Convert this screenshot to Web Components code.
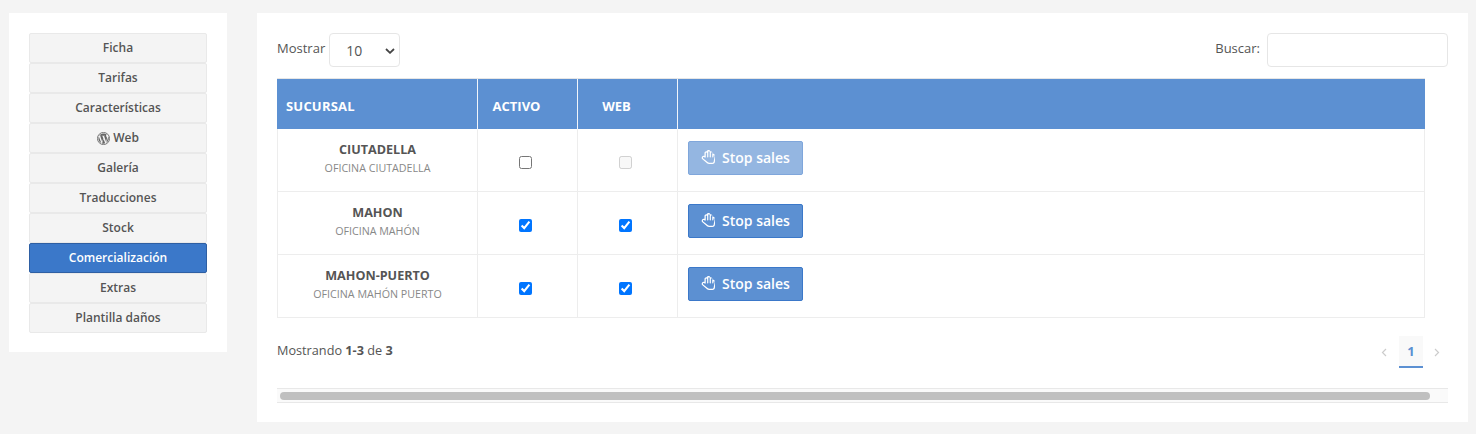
<!DOCTYPE html>
<html lang="es"><head><meta charset="utf-8"><title>Comercialización</title>
<style>
html,body{margin:0;padding:0;background:#f4f4f4}
body{font-family:"Open Sans",sans-serif;color:#555;width:1476px;height:434px;overflow:hidden}
</style></head><body>
<app-page>
  <side-nav slot="side">
    <nav-btn>Ficha</nav-btn><nav-btn>Tarifas</nav-btn><nav-btn>Características</nav-btn>
    <nav-btn icon="wp">Web</nav-btn><nav-btn>Galería</nav-btn><nav-btn>Traducciones</nav-btn>
    <nav-btn>Stock</nav-btn><nav-btn active>Comercialización</nav-btn><nav-btn>Extras</nav-btn><nav-btn>Plantilla daños</nav-btn>
  </side-nav>
  <data-panel slot="main">
    <branch-row name="CIUTADELLA" sub="OFICINA CIUTADELLA" web-disabled></branch-row>
    <branch-row name="MAHON" sub="OFICINA MAHÓN" active web></branch-row>
    <branch-row name="MAHON-PUERTO" sub="OFICINA MAHÓN PUERTO" active web last></branch-row>
  </data-panel>
</app-page>
<script>
function def(name, html, setup){
  customElements.define(name, class extends HTMLElement{
    constructor(){super();this.attachShadow({mode:'open'});}
    connectedCallback(){
      this.shadowRoot.innerHTML = typeof html==='function'?html(this):html;
      if(setup)setup(this);
    }
  });
}
const HAND='<svg viewBox="0 0 448 512" width="14" height="16" fill="currentColor" aria-hidden="true"><path d="M372.6 112c-2.6 0-5.200.2-7.700.6V95.500c0-34.300-32.400-61.600-67.500-53.800C289.200 17.500 266.400 0 239.500 0c-27.900 0-51.300 18.800-58.500 44.300C146 37.400 112 64.200 112 99.200v87.500c-29.800-11.900-64-1.200-80.600 25.900-17 27.800-11.700 65 13.300 85.900l130.700 110.100C193 423.300 213.700 448 256 448h104c60 0 88-46 88-100V187.500c0-41.500-33.500-75.500-75.400-75.500zM408 348c0 36-22 60-48 60H256c-23 0-37-14-54-28.700L70.400 268.600c-9.400-8-11.400-22.400-4.700-33.400 8-13 25.400-16.200 37.500-7l16 12.200c14 10.700 32.800.7 32.800-15.900V99.200c0-29.800 43.700-30 43.700 0V224c0 8.800 7.200 16 16 16h6.400c8.800 0 16-7.200 16-16V63.500c0-30.600 43.700-30.400 43.700 0V224c0 8.800 7.200 16 16 16h6.400c8.800 0 16-7.200 16-16V95.500c0-30 43.700-30.400 43.700 0V224c0 8.800 7.200 16 16 16h6.400c8.800 0 16-7.200 16-16v-36.500c0-29.900 43.600-30.300 43.600 0z"/></svg>';
const WP='<svg viewBox="0 0 24 24" width="13" height="13" aria-hidden="true"><circle cx="12" cy="12" r="11.200" fill="none" stroke="#666" stroke-width="1.600"/><path fill="#666" d="M2.600 12c0 3.700 2.200 6.900 5.300 8.500L3.400 8.200A9.400 9.400 0 0 0 2.600 12zm15.800-.5c0-1.200-.4-2-.8-2.600-.5-.8-.9-1.400-.9-2.200 0-.8.600-1.600 1.500-1.600h.1A9.400 9.400 0 0 0 4 6.900h.6c1 0 2.500-.1 2.500-.1.500 0 .6.700.1.800 0 0-.5.100-1.100.1l3.500 10.300 2.100-6.200-1.500-4.100c-.5 0-1-.1-1-.1-.5 0-.5-.8 0-.8 0 0 1.600.1 2.500.1 1 0 2.500-.1 2.500-.1.500 0 .6.700.1.800 0 0-.5.100-1.100.1l3.500 10.200 1-3.200c.4-1.300.7-2.200.7-3zM12.200 12.800l-2.900 8.300a9.400 9.400 0 0 0 5.800-.2l-.1-.1zM20.500 7.400l.1 1c0 1-.2 2-.7 3.400l-2.900 8.300A9.400 9.400 0 0 0 20.500 7.400z"/></svg>';

def('app-page',`<style>
:host{display:flex;align-items:flex-start;gap:30px;padding:13px 8px 12px 9px}
::slotted([slot=side]){flex:0 0 218px}
::slotted([slot=main]){flex:0 0 1211px}
</style><slot name="side"></slot><slot name="main"></slot>`);

def('side-nav',`<style>
:host{display:flex;flex-direction:column;box-sizing:border-box;background:#fff;padding:20px 20px 19px;height:339px}
::slotted(*){flex:none}
</style><slot></slot>`);

def('nav-btn',el=>`<style>
:host{display:flex;align-items:center;justify-content:center;gap:3px;box-sizing:border-box;height:30px;background:#f4f4f4;border:1px solid #e9e9e9;border-radius:2px;font-size:12px;font-weight:600;color:#555;line-height:16px}
:host([active]){background:#3b78c9;border-color:#2e5fa3;color:#fff}
svg{display:block}
</style>${el.getAttribute('icon')==='wp'?WP:''}<span><slot></slot></span>`);

def('data-panel',`<style>
:host{display:block;box-sizing:border-box;background:#fff;height:409px;padding:20px;font-size:13px;color:#555}
.top{display:flex;justify-content:space-between;align-items:center;height:34px;margin-bottom:11px}
.lab{display:flex;align-items:center;line-height:16px}
.lab>span:first-child{position:relative;top:-2px}
.g1{gap:4px}.g2{gap:7px}
.select{position:relative;width:71px;height:34px;display:block}
select{appearance:none;-webkit-appearance:none;box-sizing:border-box;width:100%;height:100%;border:1px solid #e6e6e6;border-radius:4px;background:#fff;color:#555;font:14px "Open Sans",sans-serif;padding:0 0 0 16px;margin:0;outline:0}
.select svg{position:absolute;right:5px;top:15px;pointer-events:none}
input[type=search]{appearance:none;-webkit-appearance:none;box-sizing:border-box;width:181px;height:34px;border:1px solid #e6e6e6;border-radius:4px;background:#fff;margin:0;padding:0;outline:0;display:block}
.tbl{width:1148px;box-sizing:border-box}
.head{display:grid;grid-template-columns:201px 100px 100px 1fr;height:51px;background:#5c90d2;border-top:1px solid #e6e6e6;box-sizing:border-box;color:#fff;font-weight:700;font-size:13px}
.head div{display:flex;align-items:center;border-right:1px solid #f1f5fb;box-sizing:border-box;padding-top:4px}
.head div:last-child{border-right:0}
.head .c{justify-content:center;padding-right:22px}
.head .l{padding-left:9px;letter-spacing:.2px}
.body{border:1px solid #ededed;border-top:0;border-bottom:0;margin:0}
.foot{display:flex;justify-content:space-between;align-items:flex-start;margin-top:18px;height:52px;box-sizing:border-box}
.info{line-height:16px;padding-top:6px;font-size:12.7px}
.info b{font-weight:700}
.pager{display:flex;align-items:flex-start;color:#ccc;font-size:13px}
.pager span{display:flex;align-items:center;justify-content:center;height:32px}
.ch{width:24px}
.ch.n{width:23px}
.num{width:24px;box-sizing:border-box;background:#f9f9f9;border-bottom:2px solid #5c90d2;color:#5c90d2;font-weight:700;margin:0 2px 0 3px}
.track{box-sizing:border-box;width:1171px;height:15px;background:#fafafa;border-top:1px solid #e8e8e8;border-bottom:1px solid #e8e8e8;padding:3px 18px 0 3px}
.thumb{height:8px;border-radius:4px;background:#c0c0c0}
</style>
<div class="top">
  <label class="lab g1"><span>Mostrar</span><span class="select"><select aria-label="Mostrar"><option>10</option><option>25</option><option>50</option></select><svg width="10" height="6" viewBox="0 0 10 6" fill="none" stroke="#444" stroke-width="1.800"><path d="M1 1l4 3.800L9 1"/></svg></span></label>
  <label class="lab g2"><span>Buscar:</span><input type="search" aria-label="Buscar"></label>
</div>
<div class="tbl">
  <div class="head"><div class="l">SUCURSAL</div><div class="c">ACTIVO</div><div class="c">WEB</div><div></div></div>
  <div class="body"><slot></slot></div>
</div>
<div class="foot">
  <div class="info">Mostrando <b>1-3</b> de <b>3</b></div>
  <div class="pager">
    <span class="ch"><svg width="6" height="9" viewBox="0 0 6 9" fill="none" stroke="#ccc" stroke-width="1.200"><path d="M5 1L1.500 4.500 5 8"/></svg></span>
    <span class="num">1</span>
    <span class="ch n"><svg width="6" height="9" viewBox="0 0 6 9" fill="none" stroke="#ccc" stroke-width="1.200"><path d="M1 1l3.500 3.500L1 8"/></svg></span>
  </div>
</div>
<div class="track"><div class="thumb"></div></div>`);

def('branch-row',el=>{
 const a=el.hasAttribute('active'),w=el.hasAttribute('web'),wd=el.hasAttribute('web-disabled');
 return `<style>
:host{display:grid;grid-template-columns:200px 100px 100px 1fr;height:63px;box-sizing:border-box;border-bottom:1px solid #ededed}
.cell{display:flex;align-items:center;justify-content:center;border-right:1px solid #ededed;box-sizing:border-box}
.cell.name{flex-direction:column;text-align:center;padding-bottom:2px}
.name b{font-size:12.6px;font-weight:700;color:#555;line-height:16px;margin-top:-1px}
.name small{font-size:10.7px;color:#888;line-height:14px;margin-top:3px}
.cell:last-child{border-right:0;justify-content:flex-start;padding-left:10px;padding-bottom:4px}
input{margin:1px 0 0;width:13px;height:13px;position:relative;left:-2px;top:2px}
</style>
<div class="cell name"><b>${el.getAttribute('name')}</b><small>${el.getAttribute('sub')}</small></div>
<div class="cell"><input type="checkbox" aria-label="Activo" ${a?'checked':''}></div>
<div class="cell"><input type="checkbox" aria-label="Web" ${w?'checked':''} ${wd?'disabled':''}></div>
<div class="cell"><stop-btn ${a?'':'disabled'}></stop-btn></div>`;});

def('stop-btn',el=>`<style>
:host{display:block}
button{display:flex;align-items:center;gap:7px;box-sizing:border-box;width:115px;height:34px;margin:0;padding:0 0 0 12px;background:#5c90d2;border:1px solid #3b78c9;border-radius:2px;color:#fff;font:600 14px/18px "Open Sans",sans-serif}
:host([disabled]) button{opacity:.65}
svg{display:block}
</style><button ${el.hasAttribute('disabled')?'disabled':''}>${HAND}<span>Stop sales</span></button>`);
</script>
</body></html>
